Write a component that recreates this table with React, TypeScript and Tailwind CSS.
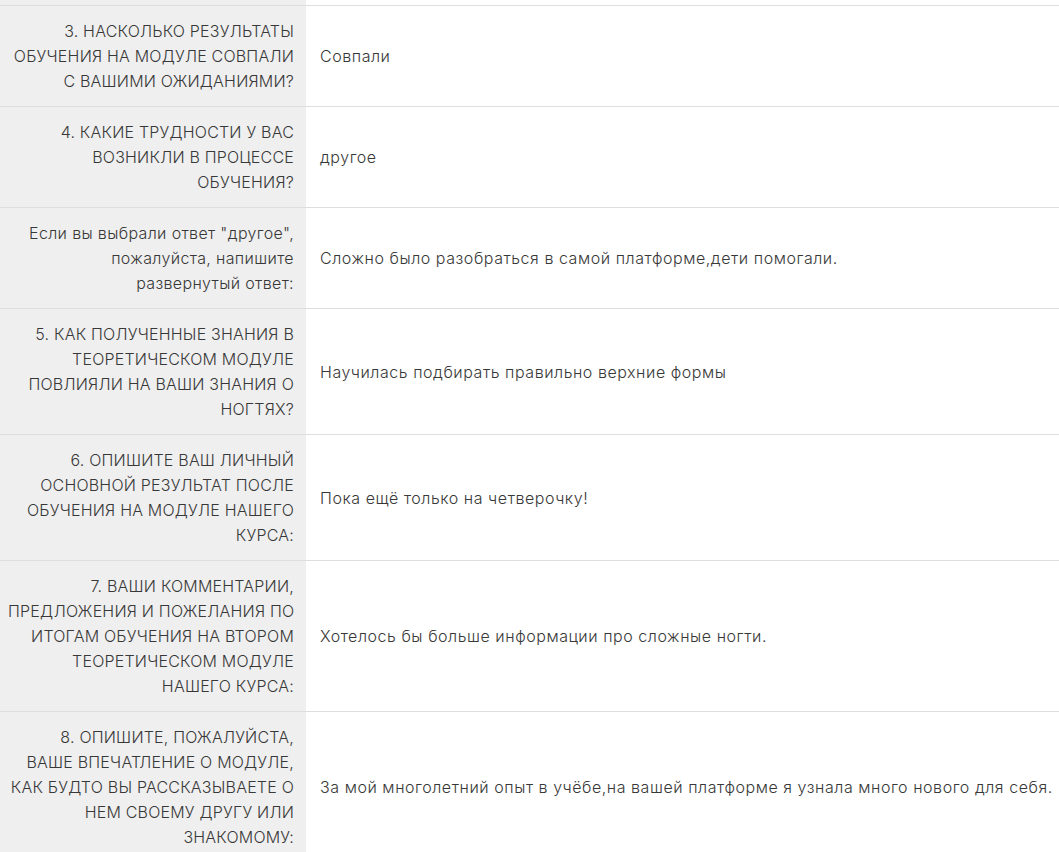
const rows: { q: string[]; a: string; lower?: boolean }[] = [
  {
    q: ["3. НАСКОЛЬКО РЕЗУЛЬТАТЫ", "ОБУЧЕНИЯ НА МОДУЛЕ СОВПАЛИ", "С ВАШИМИ ОЖИДАНИЯМИ?"],
    a: "Совпали",
  },
  {
    q: ["4. КАКИЕ ТРУДНОСТИ У ВАС", "ВОЗНИКЛИ В ПРОЦЕССЕ", "ОБУЧЕНИЯ?"],
    a: "другое",
  },
  {
    q: ['Если вы выбрали ответ "другое",', "пожалуйста, напишите", "развернутый ответ:"],
    a: "Сложно было разобраться в самой платформе,дети помогали.",
    lower: true,
  },
  {
    q: ["5. КАК ПОЛУЧЕННЫЕ ЗНАНИЯ В", "ТЕОРЕТИЧЕСКОМ МОДУЛЕ", "ПОВЛИЯЛИ НА ВАШИ ЗНАНИЯ О", "НОГТЯХ?"],
    a: "Научилась подбирать правильно верхние формы",
  },
  {
    q: ["6. ОПИШИТЕ ВАШ ЛИЧНЫЙ", "ОСНОВНОЙ РЕЗУЛЬТАТ ПОСЛЕ", "ОБУЧЕНИЯ НА МОДУЛЕ НАШЕГО", "КУРСА:"],
    a: "Пока ещё только на четверочку!",
  },
  {
    q: [
      "7. ВАШИ КОММЕНТАРИИ,",
      "ПРЕДЛОЖЕНИЯ И ПОЖЕЛАНИЯ ПО",
      "ИТОГАМ ОБУЧЕНИЯ НА ВТОРОМ",
      "ТЕОРЕТИЧЕСКОМ МОДУЛЕ",
      "НАШЕГО КУРСА:",
    ],
    a: "Хотелось бы больше информации про сложные ногти.",
  },
  {
    q: [
      "8. ОПИШИТЕ, ПОЖАЛУЙСТА,",
      "ВАШЕ ВПЕЧАТЛЕНИЕ О МОДУЛЕ,",
      "КАК БУДТО ВЫ РАССКАЗЫВАЕТЕ О",
      "НЕМ СВОЕМУ ДРУГУ ИЛИ",
      "ЗНАКОМОМУ:",
    ],
    a: "За мой многолетний опыт в учёбе,на вашей платформе я узнала много нового для себя.",
  },
];

export default function App() {
  return (
    <div className="w-[1059px] h-[852px] overflow-hidden bg-white font-['Inter','Noto_Sans',sans-serif] font-light text-[16px] leading-[25px] text-[#383838]">
      {/* tail of the previous row */}
      <div className="flex h-[5px]">
        <div className="w-[306px] shrink-0 bg-[#efefef]" />
        <div className="flex-1" />
      </div>
      {rows.map((r, i) => (
        <div key={i} className="flex border-t border-[#dedede]">
          <div
            className={`w-[306px] shrink-0 bg-[#efefef] pt-[13px] pb-3 pl-2 pr-3 text-right ${
              r.lower ? "tracking-[0.35px]" : "tracking-[0.2px]"
            }`}
          >
            {r.q.map((line, j) => (
              <div key={j} className="whitespace-nowrap">
                {line}
              </div>
            ))}
          </div>
          <div className="flex-1 flex items-center pl-[14px] pr-2 pt-[13px] pb-3 whitespace-nowrap tracking-[0.55px]">
            {r.a}
          </div>
        </div>
      ))}
    </div>
  );
}
